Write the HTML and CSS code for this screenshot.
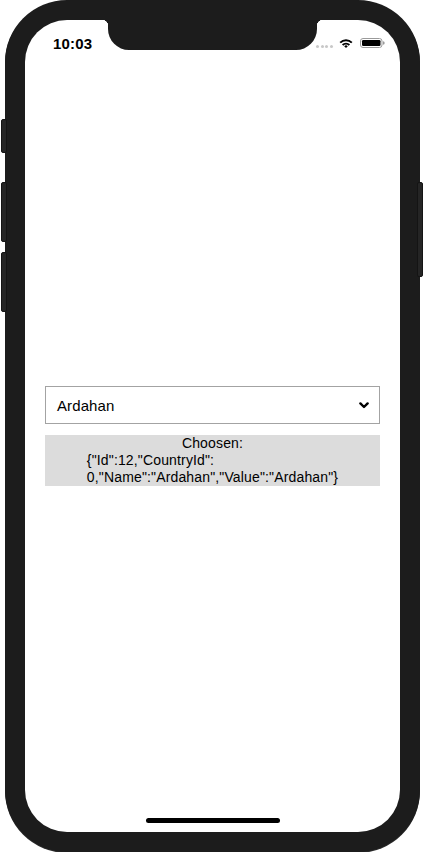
FILE: index.html
```html
<!DOCTYPE html>
<html lang="en">
<head>
<meta charset="utf-8">
<title>Picker</title>
<link rel="stylesheet" href="styles.css">
</head>
<body>
<div class="phone">
  <span class="btn btn-mute"></span>
  <span class="btn btn-vol-up"></span>
  <span class="btn btn-vol-down"></span>
  <span class="btn btn-power"></span>
  <div class="screen">
    <div class="notch"></div>
    <div class="status-bar">
      <span class="time">10:03</span>
      <div class="status-icons">
        <span class="dots"><i></i><i></i><i></i><i></i></span>
        <svg class="wifi" width="14" height="10" viewBox="0 0 14 10">
          <path d="M1.2 4.6 A8.2 8.2 0 0 1 12.8 4.6" fill="none" stroke="#000" stroke-width="1.9"/>
          <path d="M3.6 7 A4.8 4.8 0 0 1 10.4 7" fill="none" stroke="#000" stroke-width="1.9"/>
          <path d="M7 10 L5.2 8.2 A2.5 2.5 0 0 1 8.8 8.2 Z" fill="#000"/>
        </svg>
        <svg class="battery" width="25" height="10" viewBox="0 0 25 10">
          <rect x="0.5" y="0.5" width="21.5" height="9" rx="2.5" fill="none" stroke="#9a9a9a"/>
          <rect x="2" y="2" width="18.5" height="6" rx="1.2" fill="#000"/>
          <path d="M23 3.3 A1.6 1.6 0 0 1 23 6.7 Z" fill="#9a9a9a"/>
        </svg>
      </div>
    </div>
    <main class="content">
      <div class="picker">
        <span class="picker-value">Ardahan</span>
        <svg class="chevron" width="10" height="7" viewBox="0 0 10 7">
          <polyline points="1.4,1.4 5,5 8.6,1.4" fill="none" stroke="#000" stroke-width="2.4" stroke-linecap="round" stroke-linejoin="round"/>
        </svg>
      </div>
      <div class="chosen">
        <div>Choosen:</div>
        <div class="json">{"Id":12,"CountryId":<br>0,"Name":"Ardahan","Value":"Ardahan"}</div>
      </div>
    </main>
    <div class="home-indicator"></div>
  </div>
</div>
</body>
</html>
```
FILE: styles.css
```css
html, body {
  margin: 0;
  padding: 0;
  background: #fff;
}

body {
  font-family: "Liberation Sans", Arial, sans-serif;
  color: #000;
}

.phone {
  position: relative;
  box-sizing: border-box;
  width: 415px;
  height: 852px;
  margin-left: 5px;
  padding: 20px;
  background: #1c1c1c;
  border-radius: 62px;
  box-shadow: 0 1px 0 #2c2c2c;
}

.btn {
  position: absolute;
  box-sizing: border-box;
  background: #252525;
  border: 1px solid #141414;
  border-radius: 2px;
}

.btn-mute { left: -4px; top: 119px; width: 6px; height: 34px; }
.btn-vol-up { left: -4px; top: 182px; width: 6px; height: 60px; }
.btn-vol-down { left: -4px; top: 252px; width: 6px; height: 60px; }
.btn-power { right: -3px; top: 182px; width: 6px; height: 95px; }

.screen {
  position: relative;
  height: 812px;
  background: #fff;
  border-radius: 42px;
  overflow: hidden;
  display: flex;
  flex-direction: column;
}

.notch {
  position: absolute;
  top: 0;
  left: 83px;
  width: 209px;
  height: 30px;
  background: #1c1c1c;
  border-radius: 0 0 21px 21px;
}

.notch::before,
.notch::after {
  content: "";
  position: absolute;
  top: 0;
  width: 6px;
  height: 6px;
}

.notch::before {
  left: -6px;
  background: radial-gradient(circle at 0 100%, transparent 6px, #1c1c1c 6.5px);
}

.notch::after {
  right: -6px;
  background: radial-gradient(circle at 100% 100%, transparent 6px, #1c1c1c 6.5px);
}

.status-bar {
  height: 44px;
  box-sizing: border-box;
  display: flex;
  justify-content: space-between;
  align-items: flex-start;
  padding: 15px 15px 0 28px;
}

.time {
  font-size: 15px;
  line-height: 18px;
  font-weight: 700;
  letter-spacing: 0.2px;
}

.status-icons {
  display: flex;
  align-items: flex-end;
  gap: 5px;
  margin-top: 3px;
  height: 10px;
}

.dots {
  display: flex;
  gap: 1.6px;
  margin-right: 1px;
  margin-bottom: 0.5px;
}

.dots i {
  display: block;
  width: 3px;
  height: 3px;
  border-radius: 50%;
  background: #c8c8c8;
}

.wifi, .battery {
  display: block;
}

.battery {
  margin-left: 2px;
}

.content {
  padding: 322px 20px 0;
}

.picker {
  box-sizing: border-box;
  height: 38px;
  display: flex;
  align-items: center;
  justify-content: space-between;
  padding: 0 10px 0 11px;
  border: 1px solid #a3a3a3;
}

.picker-value {
  font-size: 15px;
  letter-spacing: 0.1px;
}

.chevron {
  display: block;
}

.chosen {
  margin-top: 11px;
  background: #dcdcdc;
  font-size: 14px;
  line-height: 17px;
  text-align: center;
  letter-spacing: 0.15px;
}

.json {
  display: inline-block;
  text-align: left;
}

.home-indicator {
  margin: auto auto 9px;
  width: 134px;
  height: 5px;
  border-radius: 3px;
  background: #000;
}
```
